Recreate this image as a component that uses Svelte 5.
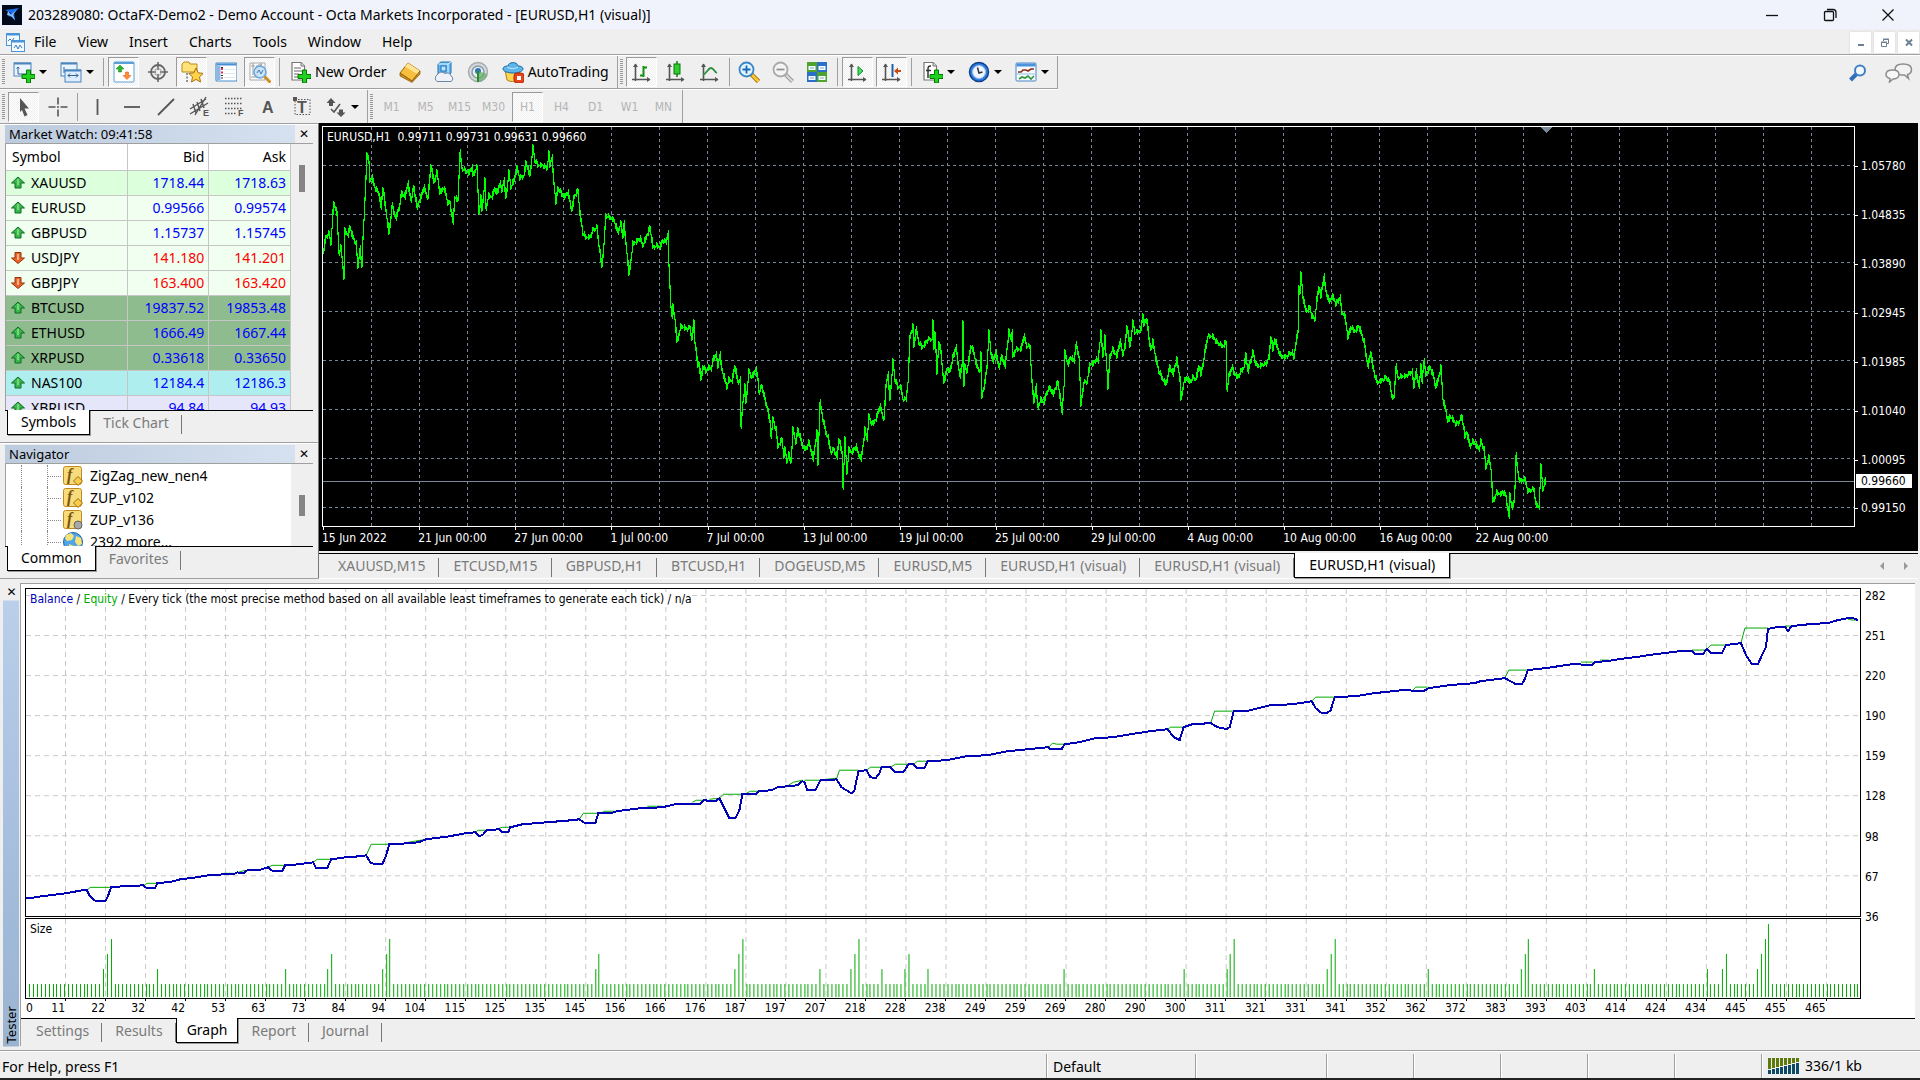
<script>
	let symbolTab = 'Symbols';
	let navigatorTab = 'Common';
	let testerTab = 'Graph';
	let activeChart = 8;
	let period = 'H1';

	const menus = ['File', 'View', 'Insert', 'Charts', 'Tools', 'Window', 'Help'];
	const periods = ['M1', 'M5', 'M15', 'M30', 'H1', 'H4', 'D1', 'W1', 'MN'];

	const charts = [
		'XAUUSD,M15',
		'ETCUSD,M15',
		'GBPUSD,H1',
		'BTCUSD,H1',
		'DOGEUSD,M5',
		'EURUSD,M5',
		'EURUSD,H1 (visual)',
		'EURUSD,H1 (visual)',
		'EURUSD,H1 (visual)'
	];

	const quotes = [
		{ symbol: 'XAUUSD', bid: '1718.44', ask: '1718.63', up: true, tone: 'mint' },
		{ symbol: 'EURUSD', bid: '0.99566', ask: '0.99574', up: true, tone: 'pale' },
		{ symbol: 'GBPUSD', bid: '1.15737', ask: '1.15745', up: true, tone: 'pale' },
		{ symbol: 'USDJPY', bid: '141.180', ask: '141.201', up: false, tone: 'pale' },
		{ symbol: 'GBPJPY', bid: '163.400', ask: '163.420', up: false, tone: 'pale' },
		{ symbol: 'BTCUSD', bid: '19837.52', ask: '19853.48', up: true, tone: 'sage' },
		{ symbol: 'ETHUSD', bid: '1666.49', ask: '1667.44', up: true, tone: 'sage' },
		{ symbol: 'XRPUSD', bid: '0.33618', ask: '0.33650', up: true, tone: 'sage' },
		{ symbol: 'NAS100', bid: '12184.4', ask: '12186.3', up: true, tone: 'aqua' },
		{ symbol: 'XBRUSD', bid: '94.84', ask: '94.93', up: true, tone: 'lilac' }
	];

	const navItems = [
		{ label: 'ZigZag_new_nen4', icon: 'script' },
		{ label: 'ZUP_v102', icon: 'script' },
		{ label: 'ZUP_v136', icon: 'scriptGrey' },
		{ label: '2392 more...', icon: 'globe' }
	];

	// type: tool (default), drop, label, sep
	const standardBar = [
		{ type: 'drop', icon: 'newChart', title: 'New chart' },
		{ type: 'drop', icon: 'profiles', title: 'Profiles' },
		{ type: 'sep' },
		{ icon: 'marketWatch', title: 'Market Watch', on: true },
		{ icon: 'dataWindow', title: 'Data Window' },
		{ icon: 'navigator', title: 'Navigator', on: true },
		{ icon: 'terminal', title: 'Terminal' },
		{ icon: 'tester', title: 'Strategy Tester', on: true },
		{ type: 'sep' },
		{ type: 'label', icon: 'newOrder', title: 'New Order' },
		{ icon: 'editor', title: 'MetaEditor' },
		{ icon: 'cloud', title: 'Virtual Hosting' },
		{ icon: 'signals', title: 'Signals' },
		{ type: 'label', icon: 'auto', title: 'AutoTrading' }
	];

	const chartBar = [
		{ icon: 'bars', title: 'Bar Chart', on: true },
		{ icon: 'candles', title: 'Candlesticks' },
		{ icon: 'line', title: 'Line Chart' },
		{ type: 'sep' },
		{ icon: 'zoomIn', title: 'Zoom In' },
		{ icon: 'zoomOut', title: 'Zoom Out' },
		{ icon: 'tile', title: 'Tile Windows' },
		{ type: 'sep' },
		{ icon: 'scroll', title: 'Auto Scroll', on: true },
		{ icon: 'shift', title: 'Chart Shift', on: true },
		{ type: 'sep' },
		{ type: 'drop', icon: 'indicators', title: 'Indicators' },
		{ type: 'drop', icon: 'clock', title: 'Periods' },
		{ type: 'drop', icon: 'templates', title: 'Templates' }
	];

	const lineBar = [
		{ icon: 'cursor', title: 'Cursor', on: true },
		{ icon: 'crosshair', title: 'Crosshair' },
		{ type: 'sep' },
		{ icon: 'vline', title: 'Vertical Line' },
		{ icon: 'hline', title: 'Horizontal Line' },
		{ icon: 'trend', title: 'Trendline' },
		{ icon: 'channel', title: 'Equidistant Channel' },
		{ icon: 'fibo', title: 'Fibonacci' },
		{ icon: 'text', title: 'Text' },
		{ icon: 'textLabel', title: 'Text Label' },
		{ type: 'drop', icon: 'arrows', title: 'Arrows' }
	];

	const axes = '<path d="M5.500 3v17M2 18.500h18" stroke="#555" stroke-width="1.600" fill="none"/><path d="M3 6l2.500-3.500L8 6zM17 16l3.500 2.500L17 21z" fill="#555"/>';
	const plus = '<path d="M13.500 9h4v4.500H22v4h-4.500V22h-4v-4.500H9v-4h4.500z" fill="#1ed21e" stroke="#067806"/>';
	const sheet = '<path d="M3 1.500h9l3.500 3.500v14H3z" fill="#fff" stroke="#777" stroke-width="1.200"/><path d="M12 1.500V5h3.500" fill="#ddd" stroke="#777"/>';
	const scriptBase = '<rect x="1.500" y="1.500" width="18" height="18" rx="2" fill="#f8dc7c" stroke="#c08a22"/><text x="5" y="15" font-family="Liberation Serif" font-size="16" font-style="italic" font-weight="bold" fill="#775510">f</text>';

	const icons = {
		newChart: `<rect x="1" y="2" width="17" height="13" fill="#e9f4ff" stroke="#4a86bd"/><path d="M1 2.500h17" stroke="#4a86bd" stroke-width="2"/><path d="M5 6v7h9M3.500 7.500L5 6l1.500 1.500" stroke="#345f90" fill="none"/>${plus}`,
		profiles: '<rect x="1" y="2" width="16" height="13" fill="#e9f4ff" stroke="#4a86bd"/><path d="M1 2.500h16" stroke="#4a86bd" stroke-width="2"/><path d="M4 6v6M4 10h9" stroke="#345f90"/><rect x="5" y="9" width="16" height="12" fill="#dceeff" stroke="#4a86bd"/><path d="M5 9.500h16" stroke="#4a86bd" stroke-width="2"/><path d="M8 14.500h10M10 12.500l-2 2 2 2M16 12.500l2 2-2 2" stroke="#345f90" fill="none"/>',
		marketWatch: '<rect x="1" y="1" width="20" height="20" rx="1" fill="#fff" stroke="#5aa0d8"/><path d="M1 2h20" stroke="#5aa0d8" stroke-width="2"/><path d="M7 4l4 4H8.500v3h-3V8H3z" fill="#2cb42c" stroke="#158015" stroke-width=".5"/><path d="M14 18.500l4-4h-2.500V11h-3v3.500H10z" fill="#ff8a3a" stroke="#d2500f" stroke-width=".5"/>',
		dataWindow: '<circle cx="11" cy="11" r="7" fill="none" stroke="#666" stroke-width="1.800"/><path d="M11 1v8M11 13v8M1 11h8M13 11h8" stroke="#666" stroke-width="1.600"/><circle cx="11" cy="11" r="3.500" fill="none" stroke="#999"/>',
		navigator: '<path d="M1 3l2-2h5l1 2h7v8H1z" fill="#ffe278" stroke="#b98a1a"/><path d="M6 12v9" stroke="#333" stroke-dasharray="2 1.500"/><path d="M15 7l2.200 4.800 5 .6-3.700 3.500 1 5.100-4.500-2.600L10.500 21l1-5.100-3.700-3.500 5-.6z" fill="#ffd24a" stroke="#a8700c"/>',
		terminal: '<rect x="1" y="2" width="21" height="18" rx="1" fill="#fff" stroke="#4b8fd0" stroke-width="1.200"/><path d="M1.500 3.500h20" stroke="#4b8fd0" stroke-width="2"/><path d="M3.500 5v14" stroke="#8fb7e6" stroke-width="4"/><path d="M9 8.500h11M9 12.500h11M9 16.500h11" stroke="#dde8f5"/><path d="M7 7v2M7 10.500v2" stroke="#ee2f4a" stroke-width="2"/><path d="M7 6v1M7 14v1M7 16.500v1" stroke="#333" stroke-width="2"/>',
		tester: '<path d="M1 2h15v17H1z" fill="#fff" stroke="#aaa"/><path d="M4 2v12M8 4v12M12 2v5M2 16h12M2 5h4M9 4h4" stroke="#999"/><circle cx="11" cy="11" r="6" fill="#bfe0fb" fill-opacity=".85" stroke="#6da7d8" stroke-width="1.600"/><path d="M8 12l2-3 2 4 2-4" stroke="#4a7ba6" fill="none"/><path d="M15.500 15.500l6 6" stroke="#cc8e1c" stroke-width="3"/>',
		newOrder: `${sheet}<path d="M5 7h7M5 10h8M5 13h5M5 16h4" stroke="#666"/>${plus}`,
		editor: '<path d="M1 12L9 2l12 8-8 10z" fill="#f6bf3d" stroke="#9c6508"/><path d="M9 2l12 8-3 3L6 5.500z" fill="#ffe491"/><path d="M1 12l12 8 8-10v3l-8 8.500L1 15z" fill="#c98a1b" stroke="#8c5907" stroke-width=".7"/>',
		cloud: '<path d="M5 3l3-2h10v11l-3 2H5z" fill="#63b7f2" stroke="#1f70b2"/><path d="M5 3h10v11M15 3l3-2" stroke="#e3f4ff" fill="none"/><rect x="8" y="5" width="5" height="5" fill="#bfe4ff" stroke="#1f70b2"/><path d="M4 20.500a4 4 0 0 1 0-6.500 5 5 0 0 1 8-1.500 4 4 0 0 1 6 2.500 3 3 0 0 1 0 5.500z" fill="#eef2f8" stroke="#6e84a3"/>',
		signals: '<circle cx="11" cy="11" r="9.500" fill="#d5dadd" stroke="#a5adb1" stroke-width="1.500"/><circle cx="11" cy="11" r="6" fill="#e8eef1" stroke="#8d9aa3" stroke-width="1.500"/><circle cx="11" cy="10" r="3" fill="#2e75b6"/><path d="M11 10v11c5-1 8-4 9-8z" fill="#5cae5c" fill-opacity=".7"/><path d="M11 10v11" stroke="#2d8b2d" stroke-width="2"/>',
		auto: '<path d="M3 9h15l-2 10c-3 2-8 2-11 0z" fill="#ffd44e" stroke="#b0801a"/><path d="M1 8c0-3 4-3 5-3 0-4 9-5 10 0 3 0 5 1 5 3 0 2-4 4-10 4S1 10 1 8z" fill="#5db5ea" stroke="#1b6ca6"/><path d="M5 6c3 2 8 2 11 0" stroke="#cbeaff" fill="none"/><rect x="12" y="12" width="10" height="10" rx="3" fill="#e8441b" stroke="#b32808"/><rect x="15" y="15" width="4" height="4" fill="#fff"/>',
		bars: `${axes}<path d="M13.500 5v11M13.500 6.500H17M10 14.500h3" stroke="#119111" stroke-width="2"/>`,
		candles: `${axes}<path d="M13 0v16" stroke="#117511" stroke-width="1.500"/><rect x="10" y="3" width="6" height="10" fill="#2cd02c" stroke="#117511"/>`,
		line: `${axes}<path d="M5 14c4-2 5-7 8-7s3 4 6 5" fill="none" stroke="#2f8f3c" stroke-width="1.800"/>`,
		zoomIn: '<path d="M13.500 13.500l7 7" stroke="#a3700e" stroke-width="4.500"/><path d="M14 14l6.500 6.500" stroke="#ffc935" stroke-width="2.500"/><circle cx="8.500" cy="8.500" r="7" fill="#e4f4ff" stroke="#3b86c6" stroke-width="1.800"/><path d="M8.500 4.500v8M4.500 8.500h8" stroke="#1669b4" stroke-width="1.800"/>',
		zoomOut: '<path d="M13.500 13.500l7 7" stroke="#9b9b9b" stroke-width="4"/><path d="M14 14l6.500 6.500" stroke="#d9d9d9" stroke-width="2"/><circle cx="8.500" cy="8.500" r="7" fill="#f4f4f4" stroke="#a9a9a9" stroke-width="1.800"/><path d="M4.500 8.500h8" stroke="#929292" stroke-width="1.800"/>',
		tile: '<rect x="1" y="1" width="10" height="10" fill="#4ea32c"/><rect x="11" y="1" width="10" height="10" fill="#2b6fcb"/><rect x="1" y="11" width="10" height="10" fill="#2b6fcb"/><rect x="11" y="11" width="10" height="10" fill="#4ea32c"/><path d="M2.500 5h7v4h-7zM12.500 5h7v4h-7zM2.500 15h7v4h-7zM12.500 15h7v4h-7z" fill="#f2fbff"/><path d="M4 7h4M14 7h4M4 17h4M14 17h4" stroke="#8ba7bd"/>',
		scroll: `${axes}<path d="M12 5.500l5 4.500-5 4.500z" fill="#45e067" stroke="#118b2b"/>`,
		shift: `${axes}<path d="M12.500 3v13" stroke="#1d5fae" stroke-width="2"/><path d="M14 10l4-3.500v2.500h3v2h-3v2.500z" fill="#cc4b0e"/>`,
		indicators: `${sheet}<path d="M10 5c-3 0-3 1-3 4v8M5 9.500h5" stroke="#333" stroke-width="1.500" fill="none"/>${plus}`,
		clock: '<circle cx="11" cy="11" r="9.500" fill="#2f7fe0" stroke="#10408c" stroke-width="1.500"/><circle cx="11" cy="11" r="6.500" fill="#f1f7ff" stroke="#9dbde6"/><path d="M9.500 6.500L11 12l3.500-1" stroke="#333" stroke-width="1.500" fill="none"/>',
		templates: '<rect x="1" y="2" width="20" height="18" rx="1" fill="#f4faff" stroke="#4b87c4"/><path d="M1.500 4h19" stroke="#4b93da" stroke-width="3"/><path d="M3 11h3l2-2h3l2 1 3-2h3" stroke="#8f2b16" stroke-width="1.600" fill="none"/><path d="M2 13h18" stroke="#9dc0e4"/><path d="M4 18l3-2 3 1 3-2 3 3 3-3" stroke="#2f963c" stroke-width="1.600" fill="none"/>',
		cursor: '<path d="M7 2l9 10.500h-4.500l3 6.500-3 1.500-2.500-6.500L7 16z" fill="#555"/>',
		crosshair: '<path d="M11 1.500v7M11 13.500v7M1.500 11h7M13.500 11h7" stroke="#555" stroke-width="1.600"/><circle cx="11" cy="11" r="1" fill="#555"/>',
		vline: '<path d="M10.500 3v16" stroke="#555" stroke-width="1.800"/>',
		hline: '<path d="M3 11h16" stroke="#555" stroke-width="1.800"/>',
		trend: '<path d="M3 19L19 3" stroke="#555" stroke-width="1.800"/>',
		channel: '<path d="M1 13L17 3M1 18L19 7M4 8l3 9M8 6l3 9M12 3l3 9M17 1L6 19" stroke="#555" stroke-width="1.400"/><text x="14" y="20" font-family="Liberation Sans" font-weight="bold" font-size="9" fill="#555">E</text>',
		fibo: '<path d="M2 2.500h18M2 7.500h18M2 12.500h18M2 17.500h12" stroke="#555" stroke-width="1.500" stroke-dasharray="1.500 1.500"/><text x="15" y="20" font-family="Liberation Sans" font-weight="bold" font-size="9" fill="#555">F</text>',
		text: '<text x="5" y="17" font-family="Liberation Sans" font-weight="bold" font-size="16" fill="#555">A</text>',
		textLabel: '<rect x="4" y="3.500" width="15" height="15" fill="none" stroke="#555" stroke-dasharray="1.500 1.500"/><path d="M2 1h4v4H2z" fill="#555"/><text x="6" y="17" font-family="Liberation Sans" font-weight="bold" font-size="16" fill="#555">T</text>',
		arrows: '<path d="M6 2l4.500 5H8v3H4V7H1.500zM16 21l-4.500-4.500H14v-3h4v3h2.500z" fill="#555"/><path d="M6 13l3 3 6-8" fill="none" stroke="#555" stroke-width="1.600"/>',
		script: `${scriptBase}<path d="M16 11.500l4.500 4.500-4.500 4.500-4.500-4.500z" fill="#f9ce4e" stroke="#9d6b10"/>`,
		scriptGrey: `${scriptBase}<circle cx="16" cy="16" r="4" fill="#a8a8a8" stroke="#666"/>`,
		globe: '<circle cx="11" cy="11" r="9.500" fill="#4fa5e8" stroke="#20619c"/><path d="M4 4l5-2 3 3-2 4-5 1-2-3zM14 5l5 2 1 6-4 2-3-4zM7 13l5 2-1 5-4-3z" fill="#f4e37a"/>',
		up: '<path d="M7 1l6.500 6H10v5H4V7H.5z" fill="#38b74c" stroke="#0f6b20"/><path d="M7 3v6" stroke="#8fe08a" stroke-width="1.500"/>',
		down: '<path d="M7 12.500L.5 7H4V1.500h6V7h3.500z" fill="#e8622a" stroke="#96330c"/><path d="M7 3v6" stroke="#ffb37c" stroke-width="2"/>',
		logo: '<rect width="20" height="20" fill="#020b1c"/><path d="M3 5l8-1 6-1-5 5 1 8-3-4-4-1 3-3z" fill="#1d6ff0"/><path d="M6 6l3 4 6-6-4 6 2 5-4-4-4-1" fill="#8fc3ff"/>',
		windows: '<rect x="1.500" y="1.500" width="13" height="12" fill="#f2f9ff" stroke="#4b94d8"/><path d="M1.500 2.500h13" stroke="#4b94d8" stroke-width="2"/><path d="M3 9l2-2 2 2 2-3" stroke="#3f7cb8" fill="none"/><rect x="6.500" y="8.500" width="13" height="11" fill="#f2f9ff" stroke="#4b94d8"/><path d="M6.500 9.500h13" stroke="#4b94d8" stroke-width="2"/><path d="M9 16l2-3 2 4 2-4 2 3" stroke="#3f7cb8" fill="none"/>'
	};

	// EURUSD H1 trace: hour offset from 15 Jun, depth below the top of the plot
	const priceTrace = `0,127 3,111 6,107 8,117 10,86 11,77 14,87 16,127 18,121 20,141 21,153 22,104 25,109 27,101 30,111 33,117
		35,141 37,122 39,141 40,111 42,74 44,27 46,37 47,54 49,51 52,61 56,67 58,81 60,62 63,84 66,107 68,91 69,79 73,92
		76,82 79,66 82,71 85,57 88,74 91,61 94,81 97,74 101,61 105,72 108,39 111,56 114,46 117,67 120,62 122,64 125,77
		127,76 130,96 132,71 135,74 137,26 139,42 142,44 146,47 149,41 150,49 154,41 156,87 158,71 159,84 162,54 163,82
		166,69 169,71 172,62 174,67 177,57 179,64 181,54 183,71 186,46 188,61 191,54 194,42 197,52 201,49 203,36 207,49
		210,21 212,34 215,39 220,39 224,42 226,27 227,39 229,31 231,57 233,76 235,62 238,66 241,71 245,66 249,84 251,71
		255,64 257,87 260,107 263,111 267,111 270,104 274,101 276,119 279,141 281,117 283,89 287,91 291,94 295,106 298,97
		300,111 301,97 304,127 306,149 308,134 310,117 313,116 317,112 320,119 323,112 327,101 330,121 334,119 337,121
		340,114 343,116 345,107 346,141 348,181 349,191 350,181 352,194 354,216 356,209 358,201 361,202 364,204 367,202
		369,214 371,196 372,217 375,241 376,237 378,254 380,241 383,246 386,242 388,244 391,232 393,229 395,241 397,229
		399,244 404,262 406,254 409,256 412,241 415,257 417,254 418,301 420,277 422,261 423,277 426,246 429,252 433,244
		435,254 436,267 439,261 442,274 444,281 447,296 448,311 450,294 453,304 455,321 459,314 461,331 462,324 464,336
		466,329 468,337 470,304 473,317 475,304 477,311 480,322 483,324 486,317 488,324 490,334 492,321 494,307 495,339
		497,277 500,294 503,307 505,312 508,327 511,324 514,332 516,314 519,327 520,362 522,314 524,347 526,324 529,327
		533,321 535,327 538,334 540,321 542,304 544,314 546,291 549,299 553,294 557,281 561,294 563,261 565,249 567,274
		570,236 572,254 575,262 578,262 580,274 583,274 585,257 587,212 590,201 591,221 593,204 596,217 599,222 602,219
		605,214 609,214 610,197 611,222 612,207 614,247 616,217 618,227 619,239 621,257 624,244 627,246 630,232 633,222
		637,251 639,241 640,196 641,259 642,241 644,246 648,221 650,224 654,241 657,246 658,229 659,271 662,257 664,241
		666,207 668,227 670,236 673,227 676,242 679,231 682,241 684,224 686,206 688,214 689,207 690,231 693,224 698,224
		701,211 704,221 707,221 709,257 711,277 713,261 715,282 718,274 721,277 724,267 727,262 730,269 735,257 737,271
		739,287 741,261 742,227 745,239 748,232 751,236 753,219 756,231 758,279 761,257 764,257 767,239 770,239 773,234
		775,236 778,207 780,231 782,212 785,262 787,231 790,224 794,231 797,216 800,229 802,221 804,201 807,221 810,197
		812,207 814,207 818,204 820,189 821,199 824,194 826,214 828,224 830,216 833,234 836,246 839,252 843,259 847,241
		850,249 852,241 854,234 857,254 858,274 861,257 864,252 867,257 870,252 873,254 876,241 878,249 880,239 883,221
		885,211 890,211 894,217 897,219 900,221 903,217 904,264 906,251 909,242 912,249 915,252 918,246 921,242 923,229
		925,246 930,227 933,239 936,241 940,239 943,239 946,232 948,212 950,224 952,214 955,224 958,231 962,232 966,229
		969,227 971,232 973,217 975,207 976,161 977,167 978,149 980,171 982,182 984,186 987,182 989,191 992,194 994,174
		996,162 998,171 1001,151 1003,166 1006,176 1010,171 1013,179 1017,172 1019,187 1022,191 1025,212 1028,202
		1032,206 1036,201 1038,207 1041,216 1045,241 1048,227 1050,242 1054,257 1058,256 1063,252 1067,257 1069,272
		1071,272 1073,241 1075,252 1079,251 1083,251 1089,246 1091,261 1093,246 1096,261 1098,241 1099,256 1101,236
		1103,249 1107,242 1110,249 1113,262 1116,251 1118,242 1120,274 1123,286 1125,296 1127,291 1130,294 1133,299
		1136,297 1139,291 1142,311 1144,307 1147,321 1150,316 1153,319 1156,324 1158,316 1161,324 1163,342 1166,332
		1168,344 1170,376 1174,367 1178,369 1180,366 1183,371 1186,391 1187,369 1189,382 1191,377 1192,361 1193,330
		1195,347 1197,356 1202,354 1205,366 1209,364 1211,364 1213,379 1216,382 1218,341 1220,364 1223,354`;

	const balanceTrace = `0,309 9,308 15,307 23,306 39,304 56,301 61,301 64,307 70,312 79,312 81,309 85,298 96,297 117,296 121,299
		129,299 131,294 147,292 154,290 170,288 182,286 198,285 207,285 211,283 217,284 221,281 232,281 242,278 247,282
		256,282 259,276 272,275 287,273 290,279 301,279 305,270 319,268 333,267 340,266 344,273 349,275 356,275 360,266
		363,255 382,254 392,253 400,250 423,247 439,244 449,243 453,247 457,245 460,241 473,240 476,243 482,243 484,238
		496,235 521,233 545,231 553,230 559,234 569,234 572,224 585,224 590,222 614,219 636,218 649,215 673,215 677,211
		689,212 693,209 698,219 703,229 709,229 713,221 716,205 729,205 732,202 745,201 751,198 771,196 776,192 778,193
		781,201 789,201 794,191 806,191 810,190 815,198 825,204 828,201 832,182 840,181 844,188 849,189 853,184 855,178
		864,178 869,183 877,183 882,175 887,175 891,179 898,179 901,172 920,171 940,167 961,166 981,162 1002,160 1022,158
		1024,160 1035,160 1038,155 1053,153 1069,149 1087,148 1104,145 1124,142 1141,140 1147,148 1153,151 1157,138
		1166,135 1184,134 1191,138 1200,140 1203,138 1207,122 1220,122 1244,116 1254,116 1274,114 1285,112 1289,119
		1295,124 1300,124 1304,121 1308,108 1329,107 1348,104 1376,101 1397,102 1402,99 1423,96 1448,94 1454,92 1478,89
		1489,95 1495,95 1498,90 1501,81 1519,79 1546,75 1565,76 1568,73 1580,72 1593,70 1609,68 1629,65 1654,62 1665,62
		1668,65 1676,65 1680,60 1684,64 1695,64 1699,56 1714,54 1719,66 1725,75 1731,75 1735,66 1739,58 1741,40 1750,38
		1758,38 1761,42 1765,37 1784,35 1801,34 1811,31 1821,29 1826,29 1831,31`;

	// stretches where equity runs above the balance
	const equityTraces = [
		'61,301 64,298 85,298', '118,296 121,294 131,294', '198,284 208,284', '212,283 219,281', '242,278 246,276 259,276',
		'287,273 291,270 305,270', '340,266 345,255 363,255', '382,253 400,250', '449,243 452,241 460,241',
		'473,239 476,238 484,238', '553,230 557,224 572,224', '576,223 578,222 590,222', '621,217 636,217',
		'666,213 670,211 677,211', '683,210 693,209', '693,209 697,205 716,205', '720,204 724,202 732,202',
		'762,196 767,193 776,191', '778,191 794,191', '800,190 810,189', '810,190 813,181 832,181', '840,181 844,178 855,178',
		'864,178 869,175 882,175', '887,175 891,172 901,172', '1022,158 1026,154 1030,155 1038,155', '1141,140 1144,138 1157,138',
		'1158,138 1163,135', '1184,134 1188,122 1207,122', '1285,112 1289,108 1308,108', '1386,101 1389,98 1401,98',
		'1478,89 1482,81 1501,81', '1554,73 1566,73', '1573,71 1582,71', '1665,61 1680,61', '1680,60 1684,56 1699,56',
		'1714,54 1718,39 1741,39', '1758,37 1765,37', '1821,30 1825,31 1831,31'
	];

	const prices = ['1.05780', '1.04835', '1.03890', '1.02945', '1.01985', '1.01040', '1.00095', '0.99150'];
	const dates = [
		'15 Jun 2022', '21 Jun 00:00', '27 Jun 00:00', '1 Jul 00:00', '7 Jul 00:00', '13 Jul 00:00', '19 Jul 00:00',
		'25 Jul 00:00', '29 Jul 00:00', '4 Aug 00:00', '10 Aug 00:00', '16 Aug 00:00', '22 Aug 00:00'
	];
	const levels = [282, 251, 220, 190, 159, 128, 98, 67, 36];
	const trades = [
		11, 22, 32, 42, 53, 63, 73, 84, 94, 104, 115, 125, 135, 145, 156, 166, 176, 187, 197, 207, 218, 228, 238, 249, 259,
		269, 280, 290, 300, 311, 321, 331, 341, 352, 362, 372, 383, 393, 403, 414, 424, 434, 445, 455, 465
	];

	// lot multiples for the trades that were averaged; every other trade is 1
	const lots = {
		20: 2, 21: 3, 22: 4, 34: 2, 67: 2, 78: 2, 79: 3, 92: 2, 93: 3, 94: 4, 147: 2, 148: 3, 183: 2, 184: 3, 185: 4,
		205: 2, 213: 2, 214: 3, 215: 4, 221: 2, 227: 2, 228: 3, 233: 2, 268: 2, 299: 2, 310: 2, 311: 3, 312: 4,
		336: 2, 337: 3, 338: 4, 362: 2, 386: 2, 387: 3, 388: 4, 405: 2, 434: 2, 438: 2, 439: 3, 447: 2, 448: 3, 449: 4, 450: 5
	};

	const PLOT_W = 1531;
	const GRAPH_W = 1833;

	const points = (trace) => trace.trim().split(/\s+/).map((pair) => pair.split(',').map(Number));

	function hourBars(trace) {
		const pts = points(trace);
		let d = '';
		for (let i = 0; i < pts.length - 1; i++) {
			const [x0, y0] = pts[i];
			const [x1, y1] = pts[i + 1];
			for (let x = x0; x < x1; x++) {
				const a = y0 + ((y1 - y0) * (x - x0)) / (x1 - x0);
				const b = y0 + ((y1 - y0) * (x + 1 - x0)) / (x1 - x0);
				const hi = Math.round(Math.min(a, b) - ((x * 7) % 4));
				const lo = Math.round(Math.max(a, b) + ((x * 11) % 3) + 1);
				d += `M${x + 0.5} ${hi}V${lo}`;
			}
		}
		return d;
	}

	function sizeBars() {
		let d = '';
		for (let n = 1; n <= 473; n++) {
			const x = Math.floor((n * 120) / 31);
			d += `M${x + 0.5} 78v-${(lots[n] || 1) * 15 - 2}`;
		}
		return d;
	}

	function lines(count, first, step) {
		return Array.from({ length: count }, (_, i) => first + i * step + 0.5);
	}

	const pricePath = hourBars(priceTrace);
	const sizePath = sizeBars();
	const gridX = lines(31, 48, 48);
	const gridY = lines(8, 39, 49);
	const graphX = lines(45, 39, 40);
	const graphY = lines(8, 6, 40);
</script>

{#snippet icon(name, size = 22)}
	<svg class="icon" width={size} height={size} viewBox="0 0 {size} {size}" aria-hidden="true">{@html icons[name]}</svg>
{/snippet}

{#snippet tools(items)}
	{#each items as item}
		{#if item.type === 'sep'}
			<span class="sep"></span>
		{:else}
			<button class="tool {item.type || ''}" class:on={item.on} title={item.title}>
				{@render icon(item.icon)}
				{#if item.type === 'label'}<span>{item.title}</span>{/if}
				{#if item.type === 'drop'}<i class="caret"></i>{/if}
			</button>
		{/if}
	{/each}
{/snippet}

<div class="app">
	<header class="titlebar">
		{@render icon('logo', 20)}
		<h1>203289080: OctaFX-Demo2 - Demo Account - Octa Markets Incorporated - [EURUSD,H1 (visual)]</h1>
		<div class="window-buttons">
			<button aria-label="Minimize"><svg width="14" height="14"><path d="M1 7.500h12" /></svg></button>
			<button aria-label="Restore"><svg width="14" height="14"><path d="M1.500 4.500q0-1 1-1h7q1 0 1 1v7q0 1-1 1h-7q-1 0-1-1zM4 1.500h6q3 0 3 3V10" /></svg></button>
			<button aria-label="Close"><svg width="14" height="14"><path d="M1.500 1.500l11 11M12.500 1.500l-11 11" /></svg></button>
		</div>
	</header>

	<nav class="menubar">
		{@render icon('windows', 20)}
		{#each menus as menu}
			<button class="menu">{menu}</button>
		{/each}
		<div class="child-buttons">
			<button aria-label="Minimize chart"><svg width="12" height="12"><path d="M3 9h6" stroke-width="2" /></svg></button>
			<button aria-label="Restore chart"><svg width="12" height="12"><path d="M2.500 6.500h5v4h-5zM2 6h6M4.500 5V3.500h5v4H8M4 3h6" /></svg></button>
			<button aria-label="Close chart"><svg width="12" height="12"><path d="M3 3.500l6 6M9 3.500l-6 6" stroke-width="2" /></svg></button>
		</div>
	</nav>

	<div class="toolrow">
		<div class="toolbar boxed"><span class="grip"></span>{@render tools(standardBar)}</div>
		<div class="toolbar boxed"><span class="grip"></span>{@render tools(chartBar)}</div>
		<div class="aside">
			<button aria-label="Search">
				<svg width="18" height="18"><path d="M1.500 16l6-6" stroke="#2f6fb5" stroke-width="4" /><circle cx="11" cy="6.500" r="5" fill="#f2f8ff" stroke="#3d7fc4" stroke-width="2" /></svg>
			</button>
			<button aria-label="Chat">
				<svg width="28" height="20"><path d="M18 1c5 0 8.500 2 8.500 5.500 0 3-2 4.500-4 5l1 4-4-3.500h-3c-4 0-6.500-2-6.500-5.500S13 1 18 1z" fill="#f2f2f2" stroke="#8d8d8d" stroke-width="1.500" /><path d="M7.500 7c4 0 6.500 1.500 6.500 4.500S11 16 8 16l-3.500 3 .5-3.500c-2.500-.5-4-2-4-4C1 8.500 3.500 7 7.500 7z" fill="#f7f7f7" stroke="#8d8d8d" stroke-width="1.500" /></svg>
			</button>
		</div>
	</div>

	<div class="toolrow lower">
		<div class="toolbar"><span class="grip"></span>{@render tools(lineBar)}</div>
		<div class="toolbar">
			<span class="grip"></span>
			{#each periods as p}
				<button class="tool period" class:on={p === period} on:click={() => (period = p)}>{p}</button>
			{/each}
		</div>
	</div>

	<div class="workspace">
		<aside class="side">
			<section class="panel market">
				<div class="panel-head"><h2>Market Watch: 09:41:58</h2><button aria-label="Close Market Watch">✕</button></div>
				<div class="panel-body">
					<div class="scroller">
						<table>
							<thead>
								<tr><th>Symbol</th><th>Bid</th><th>Ask</th></tr>
							</thead>
							<tbody>
								{#each quotes as q}
									<tr class={q.tone} class:fall={!q.up}>
										<td><span class="symbol">{@render icon(q.up ? 'up' : 'down', 14)}{q.symbol}</span></td>
										<td>{q.bid}</td>
										<td>{q.ask}</td>
									</tr>
								{/each}
							</tbody>
						</table>
					</div>
					<div class="scrollbar"><i></i></div>
				</div>
				<div class="tabs">
					{#each ['Symbols', 'Tick Chart'] as t}
						<button class:active={t === symbolTab} on:click={() => (symbolTab = t)}>{t}</button>
					{/each}
				</div>
			</section>

			<section class="panel navigator">
				<div class="panel-head"><h2>Navigator</h2><button aria-label="Close Navigator">✕</button></div>
				<div class="panel-body">
					<ul class="scroller tree">
						{#each navItems as n}
							<li><span class="branch"></span>{@render icon(n.icon)}{n.label}</li>
						{/each}
					</ul>
					<div class="scrollbar"><i></i></div>
				</div>
				<div class="tabs">
					{#each ['Common', 'Favorites'] as t}
						<button class:active={t === navigatorTab} on:click={() => (navigatorTab = t)}>{t}</button>
					{/each}
				</div>
			</section>
		</aside>

		<main class="chart-area">
			<div class="chart">
				<div class="plot">
					<svg viewBox="0 1 {PLOT_W} 400" preserveAspectRatio="none">
						<g class="grid">
							{#each gridX as x}<path d="M{x} 1V401" />{/each}
							{#each gridY as y}<path d="M0 {y}H{PLOT_W}" />{/each}
						</g>
						<path class="last" d="M0 356.500H{PLOT_W}" />
						<path class="price" d={pricePath} />
						<path class="marker" d="M1218 1h11l-5.500 6z" />
					</svg>
					<p class="caption">EURUSD,H1&nbsp; 0.99711 0.99731 0.99631 0.99660</p>
				</div>
				<div class="price-axis">
					{#each prices as p}<span>{p}</span>{/each}
					<b style="top: {(356 / 402) * 100}%">0.99660</b>
				</div>
				<div class="date-axis">
					{#each dates as d}<span style="width: {(96 / PLOT_W) * 100}%">{d}</span>{/each}
				</div>
			</div>
			<div class="tabs chart-tabs">
				{#each charts as c, i}
					<button class:active={i === activeChart} on:click={() => (activeChart = i)}>{c}</button>
				{/each}
				<div class="tab-arrows">
					<button class="prev" aria-label="Previous tab"></button>
					<button class="next" aria-label="Next tab"></button>
				</div>
			</div>
		</main>
	</div>

	<section class="tester">
		<div class="tester-rail">
			<button aria-label="Close Tester">✕</button>
			<h2>Tester</h2>
		</div>
		<div class="tester-main">
			<div class="report">
				<div class="graph">
					<svg viewBox="0 0 {GRAPH_W} 327" preserveAspectRatio="none">
						<g class="grid">
							{#each graphX as x}<path d="M{x} 0V327" />{/each}
							{#each graphY as y}<path d="M0 {y}H{GRAPH_W}" />{/each}
						</g>
						{#each equityTraces as t}<polyline class="equity" points={t} />{/each}
						<polyline class="balance" points={balanceTrace} />
					</svg>
					<p class="legend"><span class="blue">Balance</span> / <span class="green">Equity</span> / Every tick (the most precise method based on all available least timeframes to generate each tick) / n/a</p>
				</div>
				<div class="level-axis">
					{#each levels as l}<span>{l}</span>{/each}
				</div>
				<div class="graph size">
					<svg viewBox="0 0 {GRAPH_W} 79" preserveAspectRatio="none">
						<g class="grid">
							{#each graphX as x}<path d="M{x} 0V79" />{/each}
						</g>
						<path class="bars" d={sizePath} />
					</svg>
					<p class="legend">Size</p>
				</div>
				<div class="trade-axis">
					<span class="zero">0</span>
					{#each trades as t, i}<span style="width: {((i ? 40 : 39) / GRAPH_W) * 100}%">{t}</span>{/each}
				</div>
			</div>
			<div class="tabs tester-tabs">
				{#each ['Settings', 'Results', 'Graph', 'Report', 'Journal'] as t}
					<button class:active={t === testerTab} on:click={() => (testerTab = t)}>{t}</button>
				{/each}
			</div>
		</div>
	</section>

	<footer class="statusbar">
		<span class="help">For Help, press F1</span>
		<span class="cell profile">Default</span>
		<span class="cell wide"></span>
		<span class="cell"></span>
		<span class="cell"></span>
		<span class="cell"></span>
		<span class="cell"></span>
		<span class="cell"></span>
		<span class="cell traffic">
			<svg width="32" height="16">
				{#each [0, 1, 2, 3, 4, 5, 6, 7] as n}
					<rect x={n * 4} y="0" width="3" height={11 - n} fill="#5f7a0c" />
					<rect x={n * 4} y={12 - n} width="3" height={4 + n} fill="#0d4a66" />
				{/each}
			</svg>
			336/1 kb
		</span>
	</footer>
</div>

<style>
	:global(body) {
		background: #efefef;
	}
	.app {
		display: flex;
		flex-direction: column;
		height: 100vh;
		overflow: hidden;
		color: #000;
		font: 14px/20px 'Noto Sans', 'Open Sans', sans-serif;
		background: #efefef;
	}
	.app * {
		box-sizing: border-box;
	}
	button {
		padding: 0;
		border: 0;
		color: inherit;
		font: inherit;
		background: none;
	}
	h1, h2, p, ul {
		margin: 0;
		padding: 0;
		font: inherit;
	}
	svg {
		display: block;
		flex: none;
	}

	/* title and menu */
	.titlebar {
		display: flex;
		align-items: center;
		gap: 6px;
		height: 29px;
		padding: 0 3px 0 2px;
		background: #f0f3fb;
	}
	.window-buttons {
		display: flex;
		margin-left: auto;
	}
	.window-buttons button {
		display: grid;
		place-items: center;
		width: 58px;
		height: 29px;
	}
	.window-buttons path {
		fill: none;
		stroke: #111;
		stroke-width: 1.300;
	}
	.menubar {
		display: flex;
		align-items: center;
		gap: 1px;
		height: 27px;
		padding: 0 1px 0 5px;
		border-bottom: 1px solid #fff;
		box-shadow: inset 0 -1px #9f9f9f;
	}
	.menu {
		padding: 0 10px;
		height: 24px;
	}
	.menubar .icon {
		margin-right: -2px;
	}
	.child-buttons {
		display: flex;
		gap: 3px;
		margin-left: auto;
	}
	.child-buttons button {
		display: grid;
		place-items: center;
		width: 21px;
		height: 21px;
		background: #fff;
		box-shadow: 0 0 2px #ccc;
	}
	.child-buttons path {
		fill: none;
		stroke: #6d7f95;
	}

	/* toolbars */
	.toolrow {
		display: flex;
		height: 34px;
	}
	.toolrow.lower {
		height: 33px;
	}
	.toolbar {
		display: flex;
		align-items: center;
		gap: 3px;
		padding: 0 3px 0 2px;
		border-right: 1px solid #9f9f9f;
		height: 33px;
	}
	.toolbar.boxed {
		border-bottom: 1px solid #9f9f9f;
		box-shadow: 0 1px #fff;
	}
	.grip {
		width: 3px;
		height: 26px;
		background: repeating-linear-gradient(#999 0 1px, transparent 1px 2px);
	}
	.sep {
		width: 1px;
		height: 28px;
		margin: 0 1px;
		background: #9f9f9f;
	}
	.tool {
		display: flex;
		flex: none;
		align-items: center;
		justify-content: center;
		width: 31px;
		height: 30px;
		border: 1px solid transparent;
	}
	.tool.on {
		border-color: #9a9a9a #fff #fff #9a9a9a;
		background: repeating-conic-gradient(#fff 0 25%, #efefef 0 50%) 0 0 / 2px 2px;
	}
	.tool.drop {
		gap: 4px;
		width: 44px;
	}
	.tool.label {
		gap: 4px;
		width: auto;
		padding: 0 4px;
		white-space: nowrap;
	}
	.caret {
		border: 4px solid transparent;
		border-top-color: #000;
		border-bottom: 0;
	}
	.period {
		color: #b4b4b4;
		font: 12px/14px 'DejaVu Sans Condensed', 'DejaVu Sans', sans-serif;
	}
	.aside {
		display: flex;
		align-items: center;
		gap: 18px;
		margin-left: auto;
		padding-right: 7px;
	}

	/* docked panels */
	.workspace {
		display: flex;
		flex: 455 1 0;
		min-height: 0;
	}
	.side {
		display: flex;
		flex: none;
		flex-direction: column;
		width: 318px;
		border-top: 1px solid #9f9f9f;
	}
	.panel {
		display: flex;
		flex-direction: column;
		min-height: 0;
		padding: 1px 5px 7px;
		border-bottom: 1px solid #9f9f9f;
		box-shadow: inset 0 1px #fff;
	}
	.market {
		flex: 309 1 0;
	}
	.navigator {
		flex: 125 1 0;
		padding-top: 2px;
	}
	.panel-head {
		display: flex;
		justify-content: space-between;
		height: 18px;
	}
	.panel-head h2 {
		flex: 1;
		padding-left: 4px;
		line-height: 18px;
		font-size: 13px;
		background: linear-gradient(90deg, #bccbdd, #d6e1f0);
	}
	.panel-head button {
		width: 18px;
		font: 12px/18px 'DejaVu Sans', sans-serif;
	}
	.panel-body {
		display: flex;
		flex: 1;
		min-height: 0;
		border: 1px solid #9f9f9f;
		border-width: 1px 0 0 1px;
	}
	.scroller {
		flex: 1;
		overflow: hidden;
		background: #fff;
	}
	.scrollbar {
		display: flex;
		justify-content: center;
		width: 22px;
	}
	.scrollbar i {
		width: 6px;
		height: 27px;
		margin-top: 21px;
		background: #858585;
	}
	.navigator .scrollbar i {
		height: 21px;
		margin-top: 31px;
	}
	table {
		width: 100%;
		table-layout: fixed;
		border-collapse: collapse;
	}
	th, td {
		height: 25px;
		padding: 0 4px;
		border-right: 1px solid #c6c6c6;
		border-bottom: 1px solid #c6c6c6;
		color: #00f;
		text-align: right;
	}
	th {
		height: 26px;
		color: #000;
		font-weight: normal;
	}
	th:first-child {
		width: 121px;
		padding-left: 6px;
		text-align: left;
	}
	td:first-child {
		color: #000;
	}
	.fall td:not(:first-child) {
		color: #f00;
	}
	.symbol {
		display: flex;
		align-items: center;
		gap: 6px;
		padding-left: 1px;
	}
	.mint { background: #dcffdc; }
	.pale { background: #f0fff0; }
	.sage { background: #8fbc8f; }
	.aqua { background: #afeeee; }
	.lilac { background: #e6e6fa; }
	.tree {
		list-style: none;
		padding: 1px 0 0 15px;
	}
	.tree li {
		display: flex;
		align-items: center;
		height: 22px;
		border-left: 1px dotted #888;
		padding-left: 25px;
		white-space: nowrap;
	}
	.tree .icon {
		margin-right: 6px;
	}
	.branch {
		align-self: stretch;
		width: 15px;
		border-left: 1px dotted #888;
		background: repeating-linear-gradient(90deg, #888 0 1px, transparent 1px 2px) 0 50% / 100% 1px no-repeat;
	}

	/* tabs hang from a black rule */
	.tabs {
		display: flex;
		flex: none;
		height: 25px;
		padding-left: 2px;
		border-top: 1px solid #000;
		background: #efefef;
	}
	.tabs > button {
		position: relative;
		padding: 0 13px;
		color: #7a7a7a;
		white-space: nowrap;
	}
	.tabs > button::after {
		content: '';
		position: absolute;
		top: 4px;
		right: 0;
		bottom: 1px;
		border-right: 1px solid #777;
	}
	.tabs > button.active {
		margin-top: -1px;
		border: 1px solid #000;
		border-top: 0;
		color: #000;
		background: #fff;
		box-shadow: 1px 1px #999;
	}
	.tabs > button.active::after {
		display: none;
	}

	/* price chart */
	.chart-area {
		display: flex;
		flex: 1;
		flex-direction: column;
		min-width: 0;
		margin-right: 2px;
		border-left: 1px solid #777;
		border-bottom: 1px solid #fff;
	}
	.chart {
		display: grid;
		flex: 1;
		grid-template: 1fr 24px / 1fr 63px;
		min-height: 0;
		padding: 3px 0 0 3px;
		border-bottom: 2px solid #efefef;
		color: #fff;
		font: 12px/14px 'DejaVu Sans Condensed', 'DejaVu Sans', sans-serif;
		background: #000;
	}
	.plot, .graph {
		position: relative;
		min-height: 0;
		border: 1px solid #fff;
	}
	.plot svg, .graph svg {
		position: absolute;
		width: 100%;
		height: 100%;
	}
	.plot path, .graph path, .graph polyline {
		fill: none;
		shape-rendering: crispEdges;
		vector-effect: non-scaling-stroke;
	}
	.grid path {
		stroke: #778899;
		stroke-dasharray: 3 3;
	}
	.plot .last {
		stroke: #778899;
	}
	.plot .price {
		stroke: #0f0;
	}
	.plot .marker {
		fill: #778899;
	}
	.caption, .legend {
		position: absolute;
		top: 3px;
		left: 4px;
	}
	.price-axis {
		position: relative;
		display: flex;
		flex-direction: column;
		justify-content: space-between;
		padding: 33px 0 11px 6px;
	}
	.price-axis span::before {
		content: '';
		position: absolute;
		left: 0;
		width: 3px;
		height: 7px;
		border-bottom: 1px solid #fff;
	}
	.price-axis b {
		position: absolute;
		left: 1px;
		right: 6px;
		padding-left: 5px;
		color: #000;
		font-weight: normal;
		background: #fff;
		margin-top: -7px;
	}
	.date-axis {
		display: flex;
		padding: 4px 0 0;
		white-space: nowrap;
	}
	.date-axis span {
		position: relative;
		flex: none;
	}
	.date-axis span::before {
		content: '';
		position: absolute;
		top: -4px;
		left: 1px;
		height: 3px;
		border-left: 1px solid #fff;
	}
	.chart-tabs {
		padding-left: 5px;
	}
	.chart-tabs > button {
		padding: 0 14px;
	}
	.tab-arrows {
		display: flex;
		gap: 20px;
		align-items: center;
		margin-left: auto;
		padding-right: 10px;
	}
	.tab-arrows button {
		border: 4px solid transparent;
	}
	.tab-arrows .prev {
		border-right-color: #999;
		border-left: 0;
	}
	.tab-arrows .next {
		border-left-color: #999;
		border-right: 0;
	}

	/* strategy tester */
	.tester {
		display: flex;
		flex: 463 1 0;
		min-height: 0;
		padding: 4px 5px 4px 3px;
		border-bottom: 1px solid #9f9f9f;
	}
	.tester-rail {
		display: flex;
		flex-direction: column;
		width: 17px;
	}
	.tester-rail button {
		height: 18px;
		font: 12px/14px 'DejaVu Sans', sans-serif;
	}
	.tester-rail h2 {
		flex: 1;
		width: 16px;
		padding-top: 3px;
		font-size: 13px;
		line-height: 16px;
		writing-mode: vertical-rl;
		transform: rotate(180deg);
		background: linear-gradient(#9ab4d0, #9fb9d8 25%, #b9cfea);
	}
	.tester-main {
		display: flex;
		flex: 1;
		flex-direction: column;
		min-width: 0;
		border-top: 1px solid #9f9f9f;
		border-left: 1px solid #9f9f9f;
		padding-bottom: 3px;
	}
	.tester-tabs > button.active {
		padding: 0 10px;
	}
	.report {
		display: grid;
		flex: 1;
		grid-template: 329fr 81fr 18px / 1fr 54px;
		row-gap: 1px;
		min-height: 0;
		padding: 4px 0 0 4px;
		font: 12px/14px 'DejaVu Sans Condensed', 'DejaVu Sans', sans-serif;
		background: #fff;
	}
	.graph {
		border-color: #000;
	}
	.graph .grid path {
		stroke: #c8c8c8;
		stroke-dasharray: 5 4;
	}
	.graph .equity, .graph .bars {
		stroke: #00aa00;
	}
	.graph .balance {
		stroke: #0000b4;
		stroke-width: 2;
	}
	.legend {
		background: #fff;
	}
	.blue { color: #0000b4; }
	.green { color: #00aa00; }
	.level-axis {
		display: flex;
		flex-direction: column;
		justify-content: space-between;
		padding: 1px 0 0 4px;
		margin-bottom: -7px;
	}
	.trade-axis {
		display: flex;
		grid-column: 1;
		padding: 0 1px;
	}
	.trade-axis span {
		position: relative;
		flex: none;
		padding-top: 1px;
		text-align: right;
	}
	.trade-axis span:not(.zero)::before {
		content: '';
		position: absolute;
		top: -1px;
		right: -1px;
		height: 2px;
		border-left: 1px solid #000;
	}
	.trade-axis .zero {
		width: 0;
	}

	/* status bar */
	.statusbar {
		display: flex;
		align-items: stretch;
		height: 29px;
		padding-top: 2px;
		border-top: 1px solid #fff;
		border-bottom: 2px solid #222;
		line-height: 26px;
	}
	.help {
		flex: 1;
		padding-left: 2px;
	}
	.cell {
		width: 87px;
		padding-left: 6px;
		border-left: 1px solid #9f9f9f;
		box-shadow: inset 1px 0 #fff;
	}
	.profile {
		width: 149px;
	}
	.wide {
		width: 131px;
	}
	.traffic {
		display: flex;
		align-items: center;
		gap: 5px;
		width: 159px;
	}
</style>
